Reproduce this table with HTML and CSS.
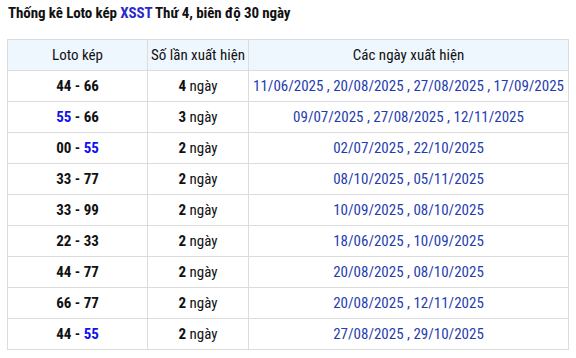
FILE: index.html
```html
<!DOCTYPE html>
<html lang="vi">
<head>
<meta charset="utf-8">
<link rel="stylesheet" href="styles.css">
</head>
<body>
<h2 class="title">Thống kê Loto kép <span class="hl">XSST</span> Thứ 4, biên độ 30 ngày</h2>
<table class="stats">
  <colgroup><col class="c1"><col class="c2"><col class="c3"></colgroup>
  <thead>
    <tr><th>Loto kép</th><th>Số lần xuất hiện</th><th>Các ngày xuất hiện</th></tr>
  </thead>
  <tbody>
    <tr><td class="pair">44 - 66</td><td><b>4</b> ngày</td><td class="dates">11/06/2025 , 20/08/2025 , 27/08/2025 , 17/09/2025</td></tr>
    <tr><td class="pair"><span class="blue">55</span> - 66</td><td><b>3</b> ngày</td><td class="dates">09/07/2025 , 27/08/2025 , 12/11/2025</td></tr>
    <tr><td class="pair">00 - <span class="blue">55</span></td><td><b>2</b> ngày</td><td class="dates">02/07/2025 , 22/10/2025</td></tr>
    <tr><td class="pair">33 - 77</td><td><b>2</b> ngày</td><td class="dates">08/10/2025 , 05/11/2025</td></tr>
    <tr><td class="pair">33 - 99</td><td><b>2</b> ngày</td><td class="dates">10/09/2025 , 08/10/2025</td></tr>
    <tr><td class="pair">22 - 33</td><td><b>2</b> ngày</td><td class="dates">18/06/2025 , 10/09/2025</td></tr>
    <tr><td class="pair">44 - 77</td><td><b>2</b> ngày</td><td class="dates">20/08/2025 , 08/10/2025</td></tr>
    <tr><td class="pair">66 - 77</td><td><b>2</b> ngày</td><td class="dates">20/08/2025 , 12/11/2025</td></tr>
    <tr><td class="pair">44 - <span class="blue">55</span></td><td><b>2</b> ngày</td><td class="dates">27/08/2025 , 29/10/2025</td></tr>
  </tbody>
</table>
</body>
</html>
```
FILE: styles.css
```css
body {
  margin: 0;
  padding: 4px 7px;
  font-family: "Roboto Condensed", "Liberation Sans Narrow", "DejaVu Sans Condensed", sans-serif;
  font-size: 15px;
  color: #111;
  background: #fff;
}
.title {
  margin: 0 0 17px 1px;
  font-size: 15px;
  font-weight: bold;
  line-height: 18px;
  letter-spacing: -0.1px;
}
.hl { color: #2a2ac8; }
.stats {
  border-collapse: collapse;
  table-layout: fixed;
  width: 561px;
}
.c1 { width: 140px; }
.c2 { width: 101px; }
.c3 { width: 320px; }
.stats th, .stats td {
  border: 1px solid #dcdcdc;
  height: 30px;
  padding: 0;
  text-align: center;
  vertical-align: middle;
  line-height: 18px;
  white-space: nowrap;
}
.stats th {
  background: #eef6fe;
  font-weight: normal;
}
.pair { font-weight: bold; }
.blue { color: #1010f0; }
.dates { color: #1f3db0; }
```
